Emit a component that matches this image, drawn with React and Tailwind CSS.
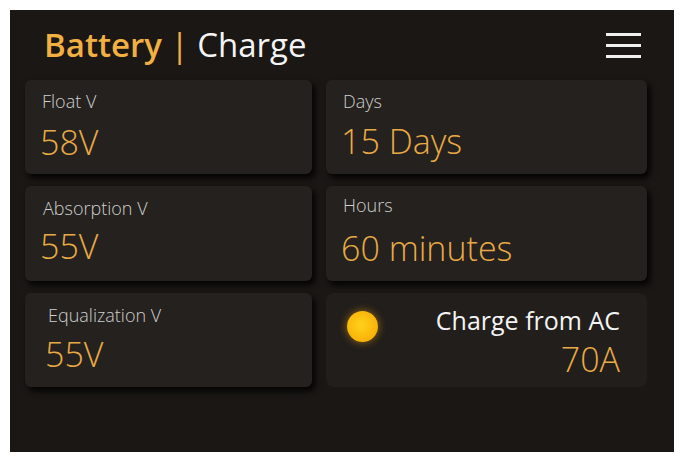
export default function App() {
  return (
    <div className="w-[684px] h-[462px] bg-white p-[10px]" style={{ fontFamily: '"Open Sans", "Noto Sans", sans-serif' }}>
      <div className="w-[664px] h-[442px] bg-[#1a1714] flex flex-col">
        <div className="flex items-center justify-between pl-[34px] pr-[33px] pt-[18px]">
          <div className="text-[33px] leading-none">
            <span className="font-semibold text-[#f2b043]">Battery</span>
            <span className="text-[#f2b043]"> | </span>
            <span className="text-[#f4f4f4]">Charge</span>
          </div>
          <div className="flex flex-col gap-[8px] mt-[2px]">
            <div className="w-[35px] h-[3px] bg-[#f0f0f0]"></div>
            <div className="w-[35px] h-[3px] bg-[#f0f0f0]"></div>
            <div className="w-[35px] h-[3px] bg-[#f0f0f0]"></div>
          </div>
        </div>

        <div className="grid grid-cols-[287px_321px] grid-rows-[94px_95px_94px] gap-x-[14px] gap-y-[12px] ml-[15px] mt-[19px]">
          <div className="bg-[#24211e] rounded-[6px] shadow-[3px_4px_6px_rgba(0,0,0,0.9)] flex flex-col pt-[12px]">
            <div className="pl-[17px] text-[18px] leading-none font-light text-[#cfcfcf]">Float V</div>
            <div className="pl-[15px] mt-[15px] text-[34px] leading-none font-light text-[#e9aa45]">58V</div>
          </div>
          <div className="bg-[#24211e] rounded-[6px] shadow-[3px_4px_6px_rgba(0,0,0,0.9)] flex flex-col pt-[12px]">
            <div className="pl-[17px] text-[18px] leading-none font-light text-[#cfcfcf]">Days</div>
            <div className="pl-[15px] mt-[14px] text-[34px] leading-none font-light text-[#e9aa45]">15 Days</div>
          </div>

          <div className="bg-[#24211e] rounded-[6px] shadow-[3px_4px_6px_rgba(0,0,0,0.9)] flex flex-col pt-[13px]">
            <div className="pl-[18px] text-[18px] leading-none font-light text-[#cfcfcf]">Absorption V</div>
            <div className="pl-[15px] mt-[12px] text-[34px] leading-none font-light text-[#e9aa45]">55V</div>
          </div>
          <div className="bg-[#24211e] rounded-[6px] shadow-[3px_4px_6px_rgba(0,0,0,0.9)] flex flex-col pt-[10px]">
            <div className="pl-[17px] text-[18px] leading-none font-light text-[#cfcfcf]">Hours</div>
            <div className="pl-[15px] mt-[17px] text-[34px] leading-none font-light text-[#e9aa45]">60 minutes</div>
          </div>

          <div className="bg-[#24211e] rounded-[6px] shadow-[3px_4px_6px_rgba(0,0,0,0.9)] flex flex-col pt-[13px]">
            <div className="pl-[23px] text-[18px] leading-none font-light text-[#cfcfcf]">Equalization V</div>
            <div className="pl-[20px] mt-[13px] text-[34px] leading-none font-light text-[#e9aa45]">55V</div>
          </div>
          <div className="bg-[#211e1b] rounded-[8px] flex items-start justify-between pl-[21px] pr-[27px] pt-[15px]">
            <div className="mt-[3px] w-[31px] h-[31px] rounded-full bg-[radial-gradient(circle_at_45%_45%,#ffd21c_0%,#fbb80c_55%,#f5a200_100%)] shadow-[0_0_8px_rgba(255,170,20,0.55)]"></div>
            <div className="flex flex-col items-end">
              <div className="text-[25px] leading-none text-[#f4f4f4]">Charge from AC</div>
              <div className="mt-[9px] text-[34px] leading-none font-light text-[#e9aa45]">70A</div>
            </div>
          </div>
        </div>
      </div>
    </div>
  )
}
